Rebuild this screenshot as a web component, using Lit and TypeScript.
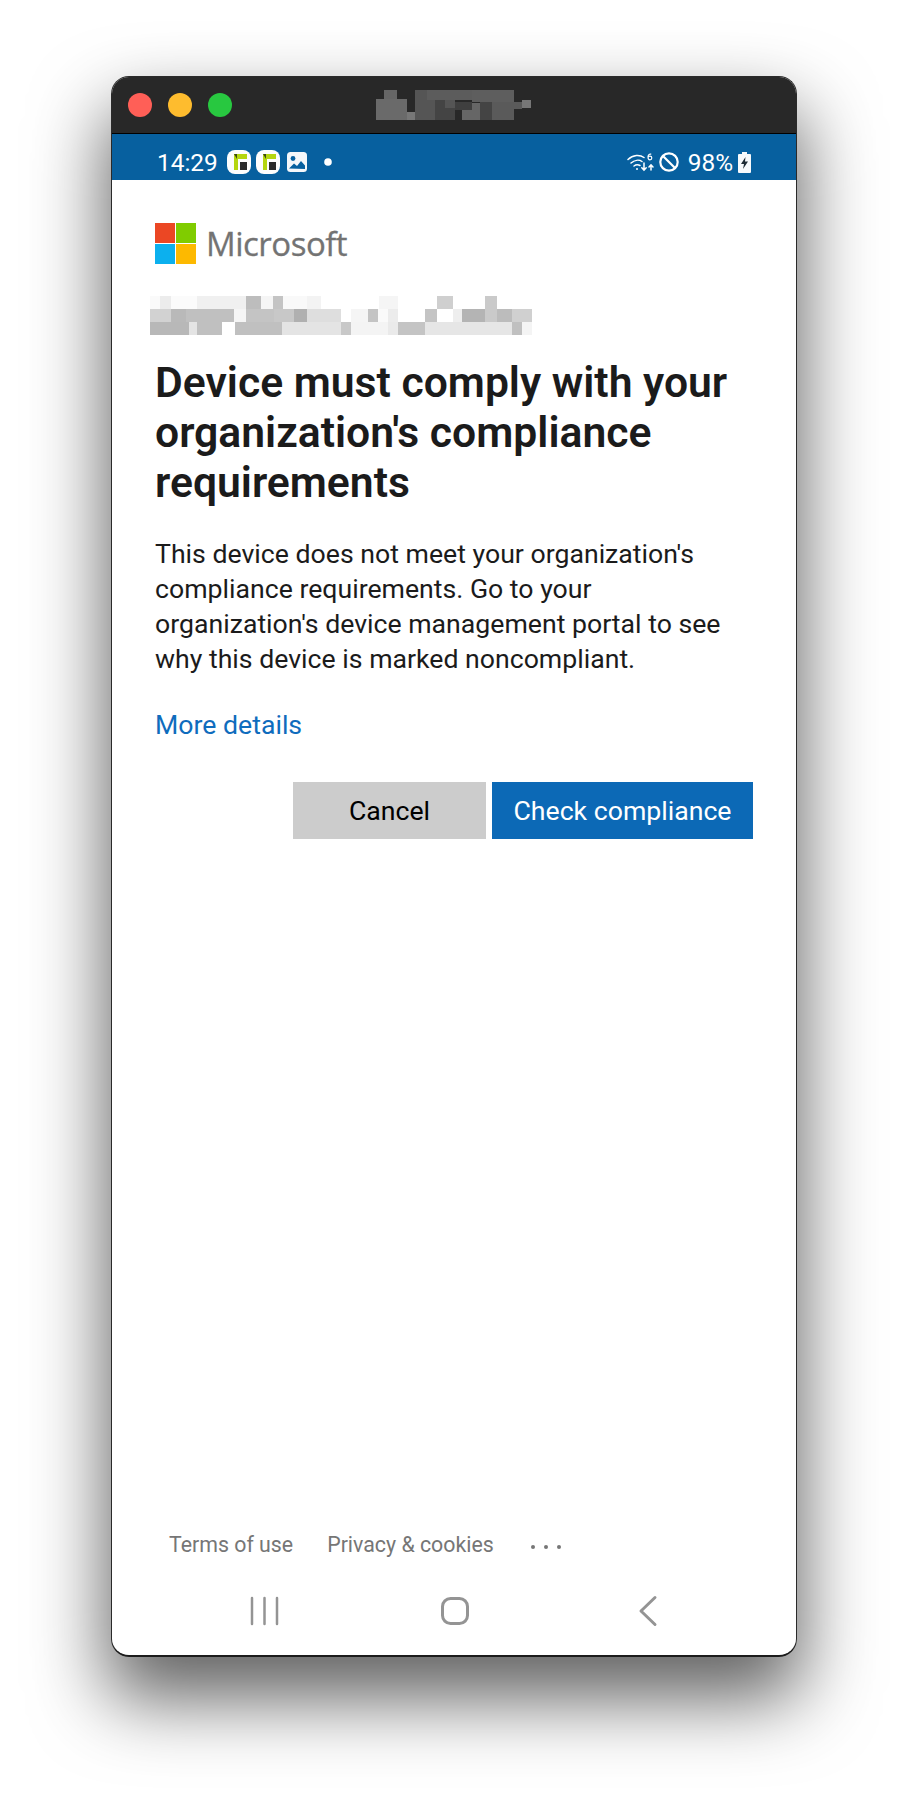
import { LitElement, html, css, svg } from 'lit';
import { customElement } from 'lit/decorators.js';

// [x, y, w, h, grey] pixelated blocks that hide the tenant name and the window title
const TITLE_BLOCKS: number[][] = [
  [0, 9, 31, 21, 0x6a], [8, 0, 13, 9, 0x66], [31, 22, 8, 8, 0x77], [39, 0, 20, 30, 0x55],
  [51, 0, 45, 10, 0x5c], [59, 10, 20, 20, 0x44], [79, 12, 17, 8, 0x3f], [69, 10, 10, 8, 0x55],
  [86, 20, 18, 10, 0x66], [96, 13, 8, 7, 0x66], [96, 0, 42, 12, 0x5e], [104, 12, 12, 18, 0x44],
  [116, 12, 22, 18, 0x5a], [138, 12, 8, 7, 0x5a], [146, 10, 9, 8, 0x77],
];

const ACCOUNT_ROWS: number[][][] = [
  [[57, 87, 0xfa], [87, 120, 0xec], [120, 200, 0xfb], [200, 345, 0xf0], [345, 392, 0xbd], [392, 427, 0xf5],
   [427, 457, 0xc4], [457, 530, 0xf9], [530, 570, 0xf3], [570, 745, 0xff], [745, 803, 0xf5], [803, 918, 0xff],
   [918, 968, 0xcf], [968, 1062, 0xff], [1062, 1098, 0xca], [1098, 1205, 0xff]],
  [[57, 120, 0xd2], [120, 165, 0xb9], [165, 310, 0xc0], [310, 345, 0xf5], [345, 430, 0xc4], [430, 490, 0xc8],
   [490, 528, 0xb0], [528, 632, 0xde], [632, 660, 0xff], [660, 713, 0xf5], [713, 742, 0xc4], [742, 773, 0xfa],
   [773, 803, 0xec], [803, 882, 0xff], [882, 918, 0xc4], [918, 968, 0xff], [968, 995, 0xee], [995, 1062, 0xb4],
   [1062, 1098, 0xca], [1098, 1143, 0xbc], [1143, 1205, 0xd0]],
  [[57, 175, 0xb8], [175, 200, 0xe4], [200, 275, 0xc0], [275, 312, 0xff], [312, 453, 0xc0], [453, 632, 0xe4],
   [632, 660, 0xc8], [660, 773, 0xf4], [773, 803, 0xea], [803, 882, 0xc4], [882, 1143, 0xe6], [1143, 1173, 0xc0],
   [1173, 1205, 0xf4]],
];

const grey = (g: number) => `rgb(${g},${g},${g})`;

@customElement('app-root')
export class AppRoot extends LitElement {
  static styles = css`
    :host {
      display: block;
      width: 908px;
      height: 1804px;
      background: #fff;
      overflow: hidden;
      font-family: Roboto, "Liberation Sans", sans-serif;
    }
    .page {
      padding: 76px 0 0 111px;
    }
    .shadow {
      width: 686px;
      border-radius: 18px;
      box-shadow: 0 38px 74px 4px rgba(0, 0, 0, 0.62);
    }
    .window {
      box-sizing: border-box;
      width: 686px;
      height: 1581px;
      display: flex;
      flex-direction: column;
      border: 1px solid #2a2a2a;
      border-bottom: 2px solid #1c1c1c;
      border-radius: 18px;
      overflow: hidden;
      background: #fff;
    }
    .titlebar {
      height: 56px;
      flex: none;
      display: flex;
      align-items: center;
      gap: 16px;
      padding-left: 16px;
      background: #282828;
      border-bottom: 1px solid #000;
    }
    .light {
      width: 24px;
      height: 24px;
      border-radius: 50%;
    }
    .red { background: #ff5f57; }
    .yellow { background: #febc2e; }
    .green { background: #28c840; }
    .title-blur {
      display: block;
      margin-left: 128px;
    }
    .status {
      box-sizing: border-box;
      height: 46px;
      flex: none;
      display: flex;
      align-items: center;
      justify-content: space-between;
      padding: 10px 45px 0 45px;
      background: #07609f;
      color: #fff;
      font-size: 24.4px;
    }
    .status-left, .status-right {
      display: flex;
      align-items: center;
    }
    .status svg { display: block; flex: none; }
    .time { margin-right: 9px; }
    .status-left svg { margin-right: 5px; }
    .status-left .pic { margin: 0 17px 0 2px; }
    .status-right .pct { margin: 0 5px 0 9px; }
    .status-right .block { margin-left: 4px; }
    .content {
      flex: 1;
      padding: 43px 43px 0 43px;
      color: #1b1b1b;
    }
    .logo {
      display: flex;
      align-items: center;
      gap: 10px;
      height: 41px;
    }
    .squares {
      width: 41px;
      height: 41px;
      display: grid;
      grid-template-columns: 20px 20px;
      grid-template-rows: 20px 20px;
      gap: 1px;
    }
    .brand {
      font-family: "Open Sans", "Liberation Sans", sans-serif;
      font-weight: 500;
      font-size: 33px;
      letter-spacing: -0.5px;
      -webkit-text-stroke: 0.3px #737373;
      color: #737373;
    }
    .account {
      display: block;
      margin: 32px 0 0 -6px;
    }
    h1 {
      margin: 22px 0 0;
      font-size: 42.67px;
      line-height: 50px;
      font-weight: 600;
      color: #1b1b1b;
    }
    p {
      margin: 30px 0 0;
      font-size: 26.67px;
      line-height: 35px;
    }
    .more {
      display: block;
      margin-top: 31px;
      font-size: 26.67px;
      line-height: 35px;
      color: #0f6cbd;
      text-decoration: none;
    }
    .actions {
      display: flex;
      justify-content: flex-end;
      gap: 6px;
      margin-top: 39px;
    }
    button {
      height: 57px;
      border: none;
      padding: 0;
      font: inherit;
      font-size: 26.67px;
    }
    .cancel { width: 193px; background: #cccccc; color: #000; }
    .check { width: 261px; background: #0c69b6; color: #fff; }
    .footer {
      flex: none;
      display: flex;
      align-items: center;
      height: 30px;
      margin-bottom: 8px;
      padding-left: 57px;
      font-size: 21.33px;
      color: #767676;
    }
    .footer a { color: inherit; text-decoration: none; }
    .footer .privacy { margin-left: 34px; }
    .footer svg { display: block; margin: 6px 0 0 36px; }
    .nav {
      flex: none;
      height: 88px;
    }
    .nav svg {
      display: block;
    }
  `;

  private appIcon() {
    return html`<svg width="24" height="24" viewBox="0 0 24 24">
      <rect width="24" height="24" rx="8" fill="#fdfdfd" />
      <path d="M7 4h13v5h-9v11H7z" fill="#b5d60f" />
      <path d="M7 4l3 5V4z" fill="#3d4a10" />
      <rect x="13" y="12" width="7" height="8" fill="#2a2a2a" />
    </svg>`;
  }

  render() {
    return html`
      <div class="page">
        <div class="shadow">
          <div class="window">
            <div class="titlebar">
              <div class="light red"></div>
              <div class="light yellow"></div>
              <div class="light green"></div>
              <svg class="title-blur" width="156" height="30" shape-rendering="crispEdges">
                ${TITLE_BLOCKS.map(([x, y, w, h, g]) => svg`<rect x=${x} y=${y} width=${w} height=${h} fill=${grey(g)} />`)}
              </svg>
            </div>
            <div class="status">
              <div class="status-left">
                <span class="time">14:29</span>
                ${this.appIcon()}
                ${this.appIcon()}
                <svg class="pic" width="20" height="20" viewBox="0 0 20 20">
                  <rect width="20" height="20" rx="3.5" fill="#f4f7fa" />
                  <circle cx="6" cy="6.5" r="2.4" fill="#07609f" />
                  <path d="M2 16.5l5-5 3 2.5 4-5 4 4.500v3.500z" fill="#07609f" />
                </svg>
                <svg width="8" height="8" viewBox="0 0 8 8"><circle cx="4" cy="4" r="3.800" fill="#fff" /></svg>
              </div>
              <div class="status-right">
                <svg width="28" height="24" viewBox="0 0 28 24" fill="none" stroke="#fff" stroke-width="1.500" stroke-linecap="round">
                  <path d="M1 9.500c5-5 12-5 16-2" />
                  <path d="M4 13c3.500-3 8-3.500 11-1.500" />
                  <path d="M7 16c2-1.500 4-1.500 6-.5" />
                  <circle cx="10" cy="19" r="1" fill="#fff" stroke="none" />
                  <path d="M17 13v7M14.800 17.800L17 20.200l2.200-2.400M24 20v-5M22 17l2-2.200 2 2.200" />
                  <path d="M23.800 4.200c-1.400-.4-2.800.6-2.800 2.800s.8 2.800 1.900 2.800 1.900-.7 1.900-1.800-.8-1.800-1.900-1.800-1.700.5-1.900 1.200" stroke-width="1.200" />
                </svg>
                <svg class="block" width="20" height="20" viewBox="0 0 20 20" fill="none" stroke="#fff" stroke-width="2.200">
                  <circle cx="10" cy="10" r="8.700" />
                  <path d="M4 4l12 12" />
                </svg>
                <span class="pct">98%</span>
                <svg width="13" height="21" viewBox="0 0 13 21">
                  <path d="M4 0h5v2h3a1 1 0 0 1 1 1v17a1 1 0 0 1-1 1H1a1 1 0 0 1-1-1V3a1 1 0 0 1 1-1h3z" fill="#f7f9fb" />
                  <path d="M7.500 5L3 12h3l-1 5 5-7.500H7z" fill="#1d2a33" />
                </svg>
              </div>
            </div>
            <div class="content">
              <div class="logo">
                <div class="squares">
                  <div style="background:#eb4724"></div>
                  <div style="background:#80cc00"></div>
                  <div style="background:#0cb0ee"></div>
                  <div style="background:#fdb900"></div>
                </div>
                <span class="brand">Microsoft</span>
              </div>
              <svg class="account" width="384" height="39" viewBox="57 0 1148 117" shape-rendering="crispEdges">
                ${ACCOUNT_ROWS.map((row, i) => row.map(([a, b, g]) =>
                  svg`<rect x=${a} y=${i * 39} width=${b - a} height="39" fill=${grey(g)} />`))}
              </svg>
              <h1>Device must comply with your organization's compliance requirements</h1>
              <p>This device does not meet your organization's compliance requirements. Go to your organization's device management portal to see why this device is marked noncompliant.</p>
              <a class="more" href="#">More details</a>
              <div class="actions">
                <button class="cancel">Cancel</button>
                <button class="check">Check compliance</button>
              </div>
            </div>
            <div class="footer">
              <a href="#">Terms of use</a>
              <a class="privacy" href="#">Privacy &amp; cookies</a>
              <svg width="32" height="6" viewBox="0 0 32 6" fill="#767676">
                <circle cx="3" cy="3" r="2" /><circle cx="16" cy="3" r="2" /><circle cx="29" cy="3" r="2" />
              </svg>
            </div>
            <div class="nav">
              <svg width="684" height="88" viewBox="0 0 684 88" fill="none" stroke="#949494" stroke-width="3" stroke-linecap="round" stroke-linejoin="round">
                <path d="M140 31v26M152.500 31v26M165 31v26" stroke-width="2.500" />
                <rect x="330.500" y="31.500" width="25" height="25" rx="8" />
                <path d="M543 30.500L529 44l14 13.500" />
              </svg>
            </div>
          </div>
        </div>
      </div>
    `;
  }
}
